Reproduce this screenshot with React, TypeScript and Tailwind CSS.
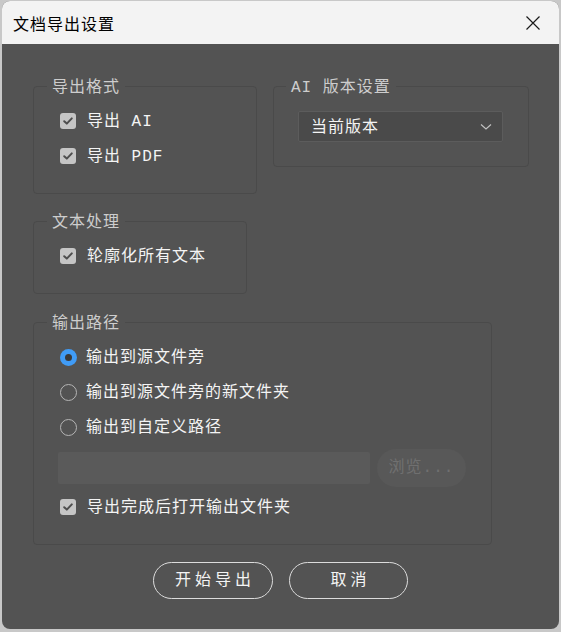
import { ReactNode } from "react";

const FONT = "font-['Liberation_Mono','Noto_Sans_CJK_SC',monospace]";

const CheckBox = ({ label }: { label: string }) => (
    <div className="h-[26px] flex items-center gap-[11px]">
        <span className="w-[16px] h-[16px] flex items-center justify-center rounded-[3px] bg-[#c5c5c5]">
            <svg width="12" height="12" viewBox="0 0 12 12" fill="none">
                <path d="M2.2 6.2 L4.8 8.6 L9.8 3.4" stroke="#4e4e4e" strokeWidth="2" strokeLinecap="round" strokeLinejoin="round" />
            </svg>
        </span>
        <span className="translate-y-[1px] text-[16px] tracking-[1px] text-[#f4f4f4]">{label}</span>
    </div>
);

const Radio = ({ label, checked }: { label: string; checked?: boolean }) => (
    <div className="h-[26px] flex items-center gap-[9px]">
        {
            checked
                ? (
                    <span className="w-[17px] h-[17px] flex items-center justify-center rounded-full bg-[#409cf7]">
                        <span className="w-[7px] h-[7px] rounded-full bg-[#3a3a3a]" />
                    </span>
                )
                : <span className="w-[17px] h-[17px] rounded-full border border-[#b5b5b5]" />
        }
        <span className="translate-y-[1px] text-[16px] tracking-[1px] text-[#f4f4f4]">{label}</span>
    </div>
);

const Group = ({ title, className, legendClass, children }: { title: string; className: string; legendClass: string; children: ReactNode }) => (
    <fieldset className={`border border-[#4a4a4a] rounded-[4px] ${className}`}>
        <legend className={`px-[5px] text-[16px] leading-[20px] tracking-[1px] text-[#cdcdcd] ${legendClass}`}>
            <span className="block translate-y-[2px]">{title}</span>
        </legend>
        {children}
    </fieldset>
);

export default function App() {
    return (
        <div className={`w-[561px] h-[632px] pl-[2px] pt-[1px] bg-[#c8c8c8] ${FONT}`}>
            <div className="w-[557px] h-[628px] flex flex-col rounded-[8px] overflow-hidden bg-[#535353]">
                {/* Title bar */}
                <div className="h-[43px] shrink-0 flex items-center pl-[11px] pr-[18px] bg-[#f3f3f3]">
                    <span className="text-[16px] tracking-[1px] text-black font-['Noto_Sans_CJK_SC',sans-serif]">文档导出设置</span>
                    <svg className="ml-auto" width="16" height="16" viewBox="0 0 16 16">
                        <path d="M1.5 1.5 L14.5 14.5 M14.5 1.5 L1.5 14.5" stroke="#1a1a1a" strokeWidth="1.2" />
                    </svg>
                </div>

                <div className="flex-1 flex flex-col pl-[31px] pt-[32px]">
                    <div className="flex items-start gap-[16px]">
                        <Group title="导出格式" className="w-[224px] h-[118px] pl-[26px]" legendClass="-ml-[13px]">
                            <div className="pt-[12px] flex flex-col gap-[9px]">
                                <CheckBox label="导出 AI" />
                                <CheckBox label="导出 PDF" />
                            </div>
                        </Group>

                        <Group title="AI 版本设置" className="w-[256px] h-[91px] pl-[24px]" legendClass="-ml-[12px]">
                            <div className="mt-[15px] w-[205px] h-[31px] flex items-center pl-[12px] pr-[10px] rounded-[2px] border border-[#5c5c5c] bg-[#4a4a4a]">
                                <span className="translate-y-[1px] text-[16px] tracking-[1px] text-[#f4f4f4]">当前版本</span>
                                <svg className="ml-auto" width="12" height="8" viewBox="0 0 12 8" fill="none">
                                    <path d="M1 1.5 L6 6 L11 1.5" stroke="#c0c0c0" strokeWidth="1.2" />
                                </svg>
                            </div>
                        </Group>
                    </div>

                    <Group title="文本处理" className="mt-[17px] w-[214px] h-[83px] pl-[26px]" legendClass="-ml-[13px]">
                        <div className="pt-[12px]">
                            <CheckBox label="轮廓化所有文本" />
                        </div>
                    </Group>

                    <Group title="输出路径" className="mt-[18px] w-[459px] h-[233px] pl-[26px]" legendClass="-ml-[13px]">
                        <div className="pt-[12px] flex flex-col gap-[9px]">
                            <Radio label="输出到源文件旁" checked />
                            <Radio label="输出到源文件旁的新文件夹" />
                            <Radio label="输出到自定义路径" />
                        </div>
                        <div className="mt-[9px] -ml-[2px] h-[38px] flex items-center gap-[7px]">
                            <div className="w-[312px] h-[32px] rounded-[2px] bg-[#5a5a5a]" />
                            <div className="w-[89px] h-[38px] flex items-center justify-center rounded-full bg-[#585858]">
                                <span className="text-[16px] tracking-[1px] text-[#707070]">浏览...</span>
                            </div>
                        </div>
                        <div className="mt-[7px]">
                            <CheckBox label="导出完成后打开输出文件夹" />
                        </div>
                    </Group>

                    <div className="mt-[17px] pr-[31px] flex justify-center gap-[16px]">
                        <button className="w-[120px] h-[37px] pl-[4px] rounded-full border border-[#dcdcdc] text-[16px] tracking-[4px] text-[#f4f4f4]">开始导出</button>
                        <button className="w-[119px] h-[37px] pl-[4px] rounded-full border border-[#dcdcdc] text-[16px] tracking-[4px] text-[#f4f4f4]">取消</button>
                    </div>
                </div>
            </div>
        </div>
    );
}
